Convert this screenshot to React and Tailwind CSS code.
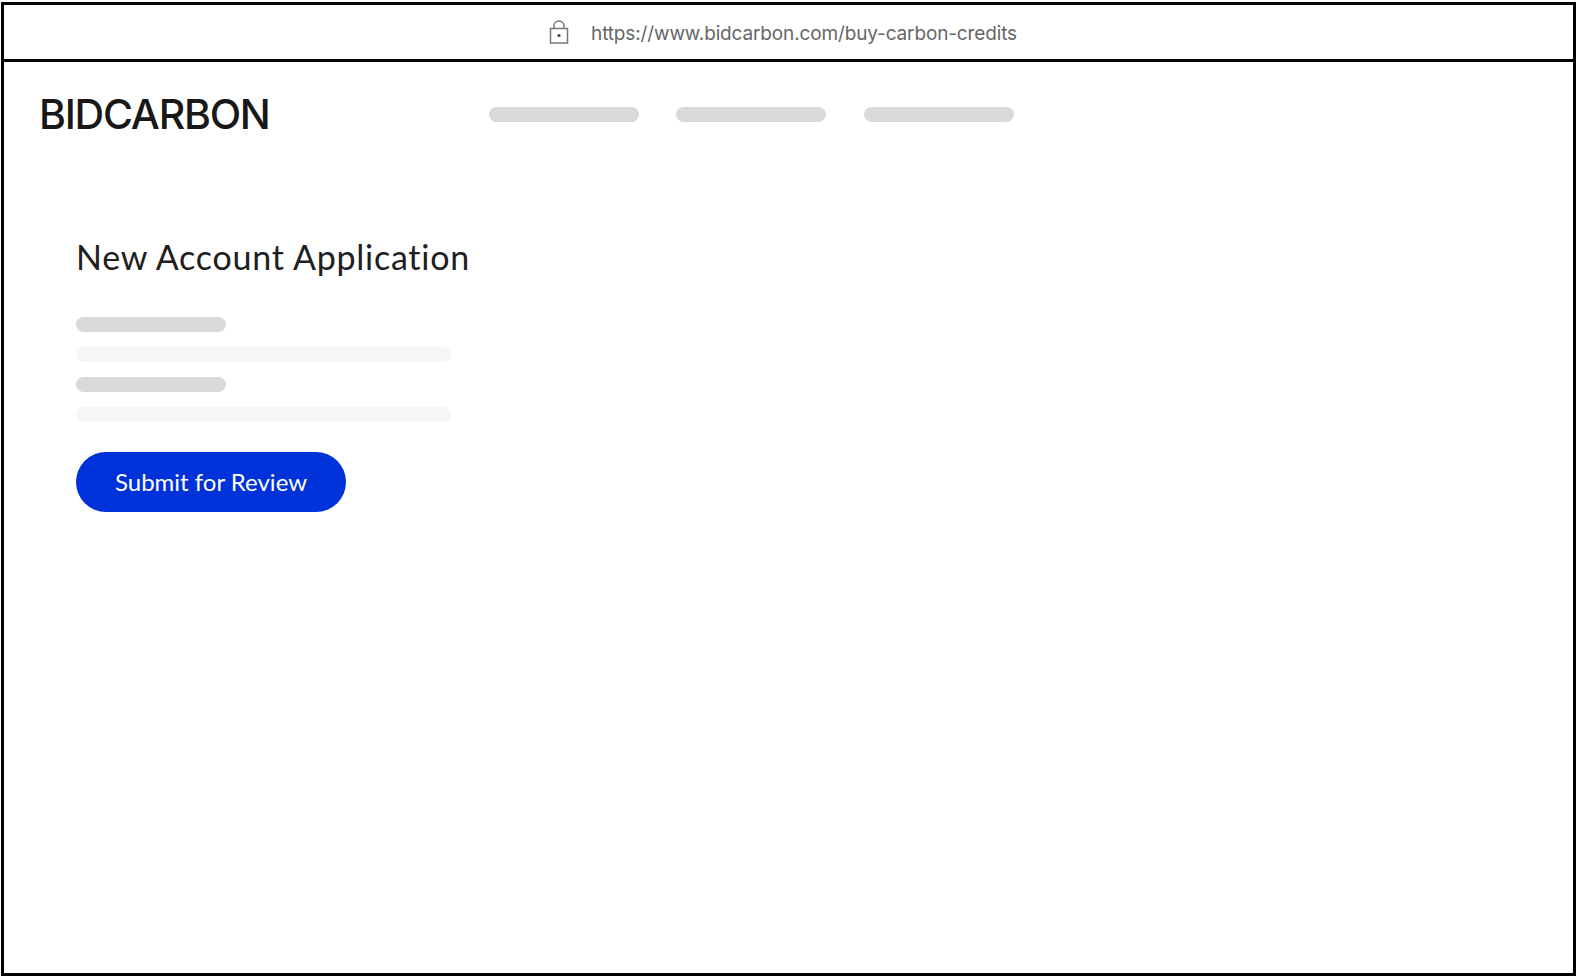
import React from "react";

const Bar = ({ className }) => <div className={`h-[15px] rounded-full ${className}`}></div>;

const App = () => {
  return (
    <div className="w-[1578px] h-[978px] bg-white pt-[2px] pl-[1px] overflow-hidden">
      <div className="w-[1575px] h-[974px] border-[3px] border-black flex flex-col">
        {/* Address bar */}
        <div className="h-[57px] shrink-0 border-b-[3px] border-black flex items-center justify-center pb-[1px] pr-[11px]">
          <svg width="20" height="24" viewBox="0 0 20 24" fill="none" stroke="#777" strokeWidth="1.5">
            <rect x="1.5" y="8.5" width="17" height="14.5" />
            <path d="M5 8.5V5.5a5 4.6 0 0 1 10 0v3" />
            <circle cx="10" cy="15.5" r="1.6" fill="#444" stroke="none" />
          </svg>
          <span className="ml-[22px] mt-[6px] text-[19px] tracking-[-0.14px] text-[#666] font-['Inter',sans-serif] font-normal">
            https://www.bidcarbon.com/buy-carbon-credits
          </span>
        </div>

        {/* Header */}
        <div className="flex items-center pl-[35px] pt-[30px]">
          <div className="w-[450px] text-[41px] leading-[44px] tracking-[-1.25px] text-[#181818] font-['Inter',sans-serif] font-medium">
            BIDCARBON
          </div>
          <div className="flex gap-[37.3px]">
            <Bar className="w-[150px] bg-[#d9d9d9]" />
            <Bar className="w-[150px] bg-[#d9d9d9]" />
            <Bar className="w-[150px] bg-[#d9d9d9]" />
          </div>
        </div>

        {/* Form */}
        <div className="pl-[72px] pt-[101px]">
          <h1 className="text-[34px] leading-[40px] tracking-[0.75px] text-[#202020] font-['Lato',sans-serif]">
            New Account Application
          </h1>
          <div className="mt-[40px] flex flex-col gap-[15px]">
            <Bar className="w-[150px] bg-[#d9d9d9]" />
            <Bar className="w-[375px] bg-[#f6f6f6]" />
            <Bar className="w-[150px] bg-[#d9d9d9]" />
            <Bar className="w-[375px] bg-[#f6f6f6]" />
          </div>
          <button className="mt-[30px] w-[270px] h-[60px] rounded-full bg-[#0032d9] text-white text-[24px] font-['Lato',sans-serif]">
            Submit for Review
          </button>
        </div>
      </div>
    </div>
  );
};

export default App;
